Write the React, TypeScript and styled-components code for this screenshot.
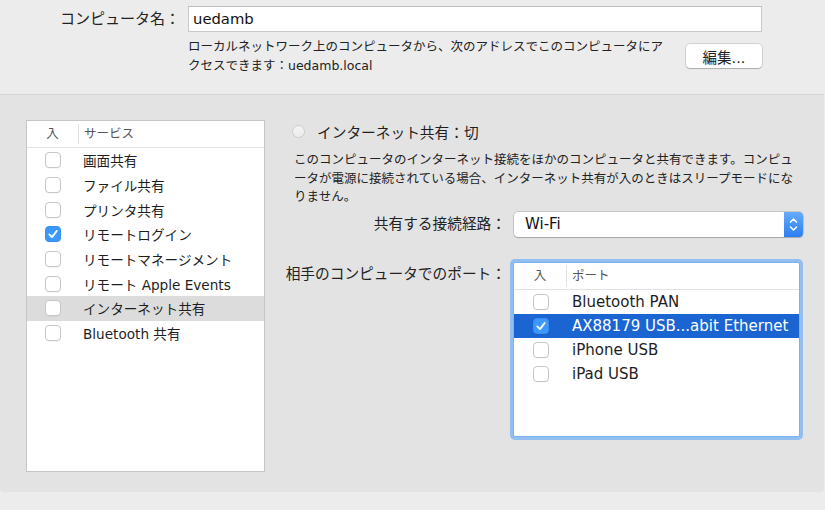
import React from "react";
import styled, { createGlobalStyle } from "styled-components";

const GlobalStyle = createGlobalStyle`
  html, body { margin: 0; padding: 0; }
  body {
    background: #ececec;
    font-family: "DejaVu Sans", "Noto Sans CJK JP", sans-serif;
    color: #1e1e1e;
  }
`;

const Window = styled.div`
  width: 825px;
  height: 510px;
  display: flex;
  flex-direction: column;
  overflow: hidden;
  background: #ececec;
`;

const Top = styled.div`
  height: 94px;
  box-sizing: border-box;
  padding: 6px 63px 0 0;
  display: grid;
  grid-template-columns: 180px 1fr;
  grid-template-rows: 26px auto;
  column-gap: 8px;
  row-gap: 6px;
  align-content: start;
`;

const NameLabel = styled.div`
  font-size: 15px;
  line-height: 26px;
  text-align: right;
  white-space: nowrap;
  color: #222;
`;

const TextField = styled.div`
  height: 26px;
  box-sizing: border-box;
  background: #fff;
  border: 1px solid #c8c8c8;
  border-top-color: #bdbdbd;
  padding: 0 4px;
  font-size: 14.8px;
  line-height: 24px;
  color: #111;
`;

const InfoRow = styled.div`
  grid-column: 2;
  display: flex;
  justify-content: space-between;
  align-items: flex-start;
`;

const InfoText = styled.div`
  font-size: 12.5px;
  line-height: 18.5px;
  white-space: nowrap;
  color: #222;
`;

const PushButton = styled.button`
  margin-top: 6px;
  width: 76px;
  height: 24px;
  padding: 0;
  border: none;
  border-radius: 4px;
  background: #fff;
  box-shadow: 0 0 0 0.5px rgba(0, 0, 0, 0.22), 0 1px 1px rgba(0, 0, 0, 0.18);
  font-family: inherit;
  font-size: 14.5px;
  color: #222;
`;

const Panel = styled.div`
  flex: 1;
  display: flex;
  gap: 18px;
  margin-right: 1px;
  padding: 25px 21px 20px 26px;
  background: #e3e3e3;
  border-top: 1px solid #d5d5d5;
  border-radius: 0 0 4px 4px;
`;

const Footer = styled.div`
  height: 18px;
  flex-shrink: 0;
  background: #ececec;
`;

const ListBox = styled.div`
  width: 239px;
  flex-shrink: 0;
  box-sizing: border-box;
  background: #fff;
  border: 1px solid #c6c6c6;
  display: flex;
  flex-direction: column;
`;

const TableHeader = styled.div<{ $checkCol: number }>`
  height: 27px;
  flex-shrink: 0;
  box-sizing: border-box;
  border-bottom: 1px solid #e2e2e2;
  display: grid;
  grid-template-columns: ${(p) => p.$checkCol}px 1fr;
  align-items: center;
  font-size: 12.5px;
  color: #555;
`;

const CheckHead = styled.div`
  height: 20px;
  line-height: 20px;
  text-align: center;
  border-right: 1px solid #e0e0e0;
`;

const NameHead = styled.div`
  padding-left: 5px;
  line-height: 20px;
`;

const TableRow = styled.div<{ $checkCol: number; $h: number; $sel?: "grey" | "blue"; $fs: number; $pad: number }>`
  height: ${(p) => p.$h}px;
  flex-shrink: 0;
  display: grid;
  grid-template-columns: ${(p) => p.$checkCol}px 1fr;
  align-items: center;
  font-size: ${(p) => p.$fs}px;
  white-space: nowrap;
  background: ${(p) => (p.$sel === "grey" ? "#dcdcdc" : p.$sel === "blue" ? "#1b65d3" : "transparent")};
  color: ${(p) => (p.$sel === "blue" ? "#fff" : "#1e1e1e")};
  & > span:last-child {
    padding-left: ${(p) => p.$pad}px;
  }
`;

const Box = styled.span<{ $checked?: boolean }>`
  justify-self: center;
  width: 16px;
  height: 16px;
  box-sizing: border-box;
  border-radius: 4px;
  display: flex;
  align-items: center;
  justify-content: center;
  background: ${(p) => (p.$checked ? "#3c98fb" : "#fff")};
  border: 1px solid ${(p) => (p.$checked ? "#3a8ef0" : "#c6c6c6")};
  box-shadow: 0 1px 0 rgba(0, 0, 0, 0.03);
`;

const RightCol = styled.div`
  flex: 1;
  display: flex;
  flex-direction: column;
`;

const RadioRow = styled.div`
  height: 22px;
  display: flex;
  align-items: center;
  gap: 12px;
  padding-left: 9px;
  font-size: 14.7px;
  white-space: nowrap;
`;

const Radio = styled.span`
  width: 13px;
  height: 13px;
  box-sizing: border-box;
  border-radius: 50%;
  border: 1px solid #cdcdcd;
  background: linear-gradient(#f3f3f3, #ececec);
`;

const Description = styled.div`
  margin: 9px 0 0 11px;
  font-size: 12.5px;
  line-height: 18.5px;
  white-space: nowrap;
  color: #222;
`;

const FormRow = styled.div<{ $top: number; $align: string }>`
  margin-top: ${(p) => p.$top}px;
  display: flex;
  align-items: ${(p) => p.$align};
`;

const FieldLabel = styled.div<{ $offset?: number }>`
  width: 223px;
  flex-shrink: 0;
  margin-top: ${(p) => p.$offset ?? 0}px;
  text-align: right;
  font-size: 14.7px;
  line-height: 20px;
  white-space: nowrap;
  color: #222;
`;

const Popup = styled.div`
  flex: 1;
  margin-left: 8px;
  height: 25px;
  display: flex;
  align-items: center;
  background: #fff;
  border-radius: 4px;
  box-shadow: 0 0 0 0.5px rgba(0, 0, 0, 0.25), 0 1px 1px rgba(0, 0, 0, 0.16);
`;

const PopupText = styled.span`
  flex: 1;
  padding-left: 11px;
  font-size: 15px;
  color: #111;
`;

const PopupArrows = styled.span`
  width: 19px;
  align-self: stretch;
  display: flex;
  align-items: center;
  justify-content: center;
  border-radius: 0 4px 4px 0;
  background: linear-gradient(#66acf8, #2b7df1);
`;

const PortsBox = styled.div`
  width: 287px;
  height: 175px;
  margin-left: 7px;
  box-sizing: border-box;
  background: #fff;
  border: 1px solid #7fb1ec;
  border-radius: 2px;
  box-shadow: 0 0 0 3px #92bef1;
  display: flex;
  flex-direction: column;
  overflow: hidden;
`;

const Check = () => (
  <svg width="12" height="12" viewBox="0 0 12 12">
    <path d="M2.3 6.4 L5 9.1 L9.8 2.9" fill="none" stroke="#fff" strokeWidth="1.8" strokeLinecap="round" strokeLinejoin="round" />
  </svg>
);

const Chevrons = () => (
  <svg width="9" height="17" viewBox="0 0 9 17">
    <path d="M1.5 6 L4.5 3 L7.5 6 M1.5 11 L4.5 14 L7.5 11" fill="none" stroke="#fff" strokeWidth="1.5" strokeLinecap="round" strokeLinejoin="round" />
  </svg>
);

const services = [
  { name: "画面共有", on: false },
  { name: "ファイル共有", on: false },
  { name: "プリンタ共有", on: false },
  { name: "リモートログイン", on: true },
  { name: "リモートマネージメント", on: false },
  { name: "リモート Apple Events", on: false },
  { name: "インターネット共有", on: false, sel: true },
  { name: "Bluetooth 共有", on: false },
];

const ports = [
  { name: "Bluetooth PAN", on: false },
  { name: "AX88179 USB...abit Ethernet", on: true, sel: true },
  { name: "iPhone USB", on: false },
  { name: "iPad USB", on: false },
];

export default function App() {
  return (
    <Window>
      <GlobalStyle />
      <Top>
        <NameLabel>コンピュータ名：</NameLabel>
        <TextField>uedamb</TextField>
        <InfoRow>
          <InfoText>
            ローカルネットワーク上のコンピュータから、次のアドレスでこのコンピュータにア
            <br />
            クセスできます：uedamb.local
          </InfoText>
          <PushButton>編集...</PushButton>
        </InfoRow>
      </Top>
      <Panel>
        <ListBox>
          <TableHeader $checkCol={52}>
            <CheckHead>入</CheckHead>
            <NameHead>サービス</NameHead>
          </TableHeader>
          {services.map((s) => (
            <TableRow key={s.name} $checkCol={52} $h={24.67} $fs={13.6} $pad={4} $sel={s.sel ? "grey" : undefined}>
              <Box $checked={s.on}>{s.on && <Check />}</Box>
              <span>{s.name}</span>
            </TableRow>
          ))}
        </ListBox>
        <RightCol>
          <RadioRow>
            <Radio />
            <span>インターネット共有：切</span>
          </RadioRow>
          <Description>
            このコンピュータのインターネット接続をほかのコンピュータと共有できます。コンピュ
            <br />
            ータが電源に接続されている場合、インターネット共有が入のときはスリープモードにな
            <br />
            りません。
          </Description>
          <FormRow $top={5} $align="center">
            <FieldLabel>共有する接続経路：</FieldLabel>
            <Popup>
              <PopupText>Wi-Fi</PopupText>
              <PopupArrows>
                <Chevrons />
              </PopupArrows>
            </Popup>
          </FormRow>
          <FormRow $top={25} $align="flex-start">
            <FieldLabel $offset={2.5}>相手のコンピュータでのポート：</FieldLabel>
            <PortsBox>
              <TableHeader $checkCol={53}>
                <CheckHead>入</CheckHead>
                <NameHead>ポート</NameHead>
              </TableHeader>
              {ports.map((p) => (
                <TableRow key={p.name} $checkCol={53} $h={24} $fs={15} $pad={5} $sel={p.sel ? "blue" : undefined}>
                  <Box $checked={p.on}>{p.on && <Check />}</Box>
                  <span>{p.name}</span>
                </TableRow>
              ))}
            </PortsBox>
          </FormRow>
        </RightCol>
      </Panel>
      <Footer />
    </Window>
  );
}
